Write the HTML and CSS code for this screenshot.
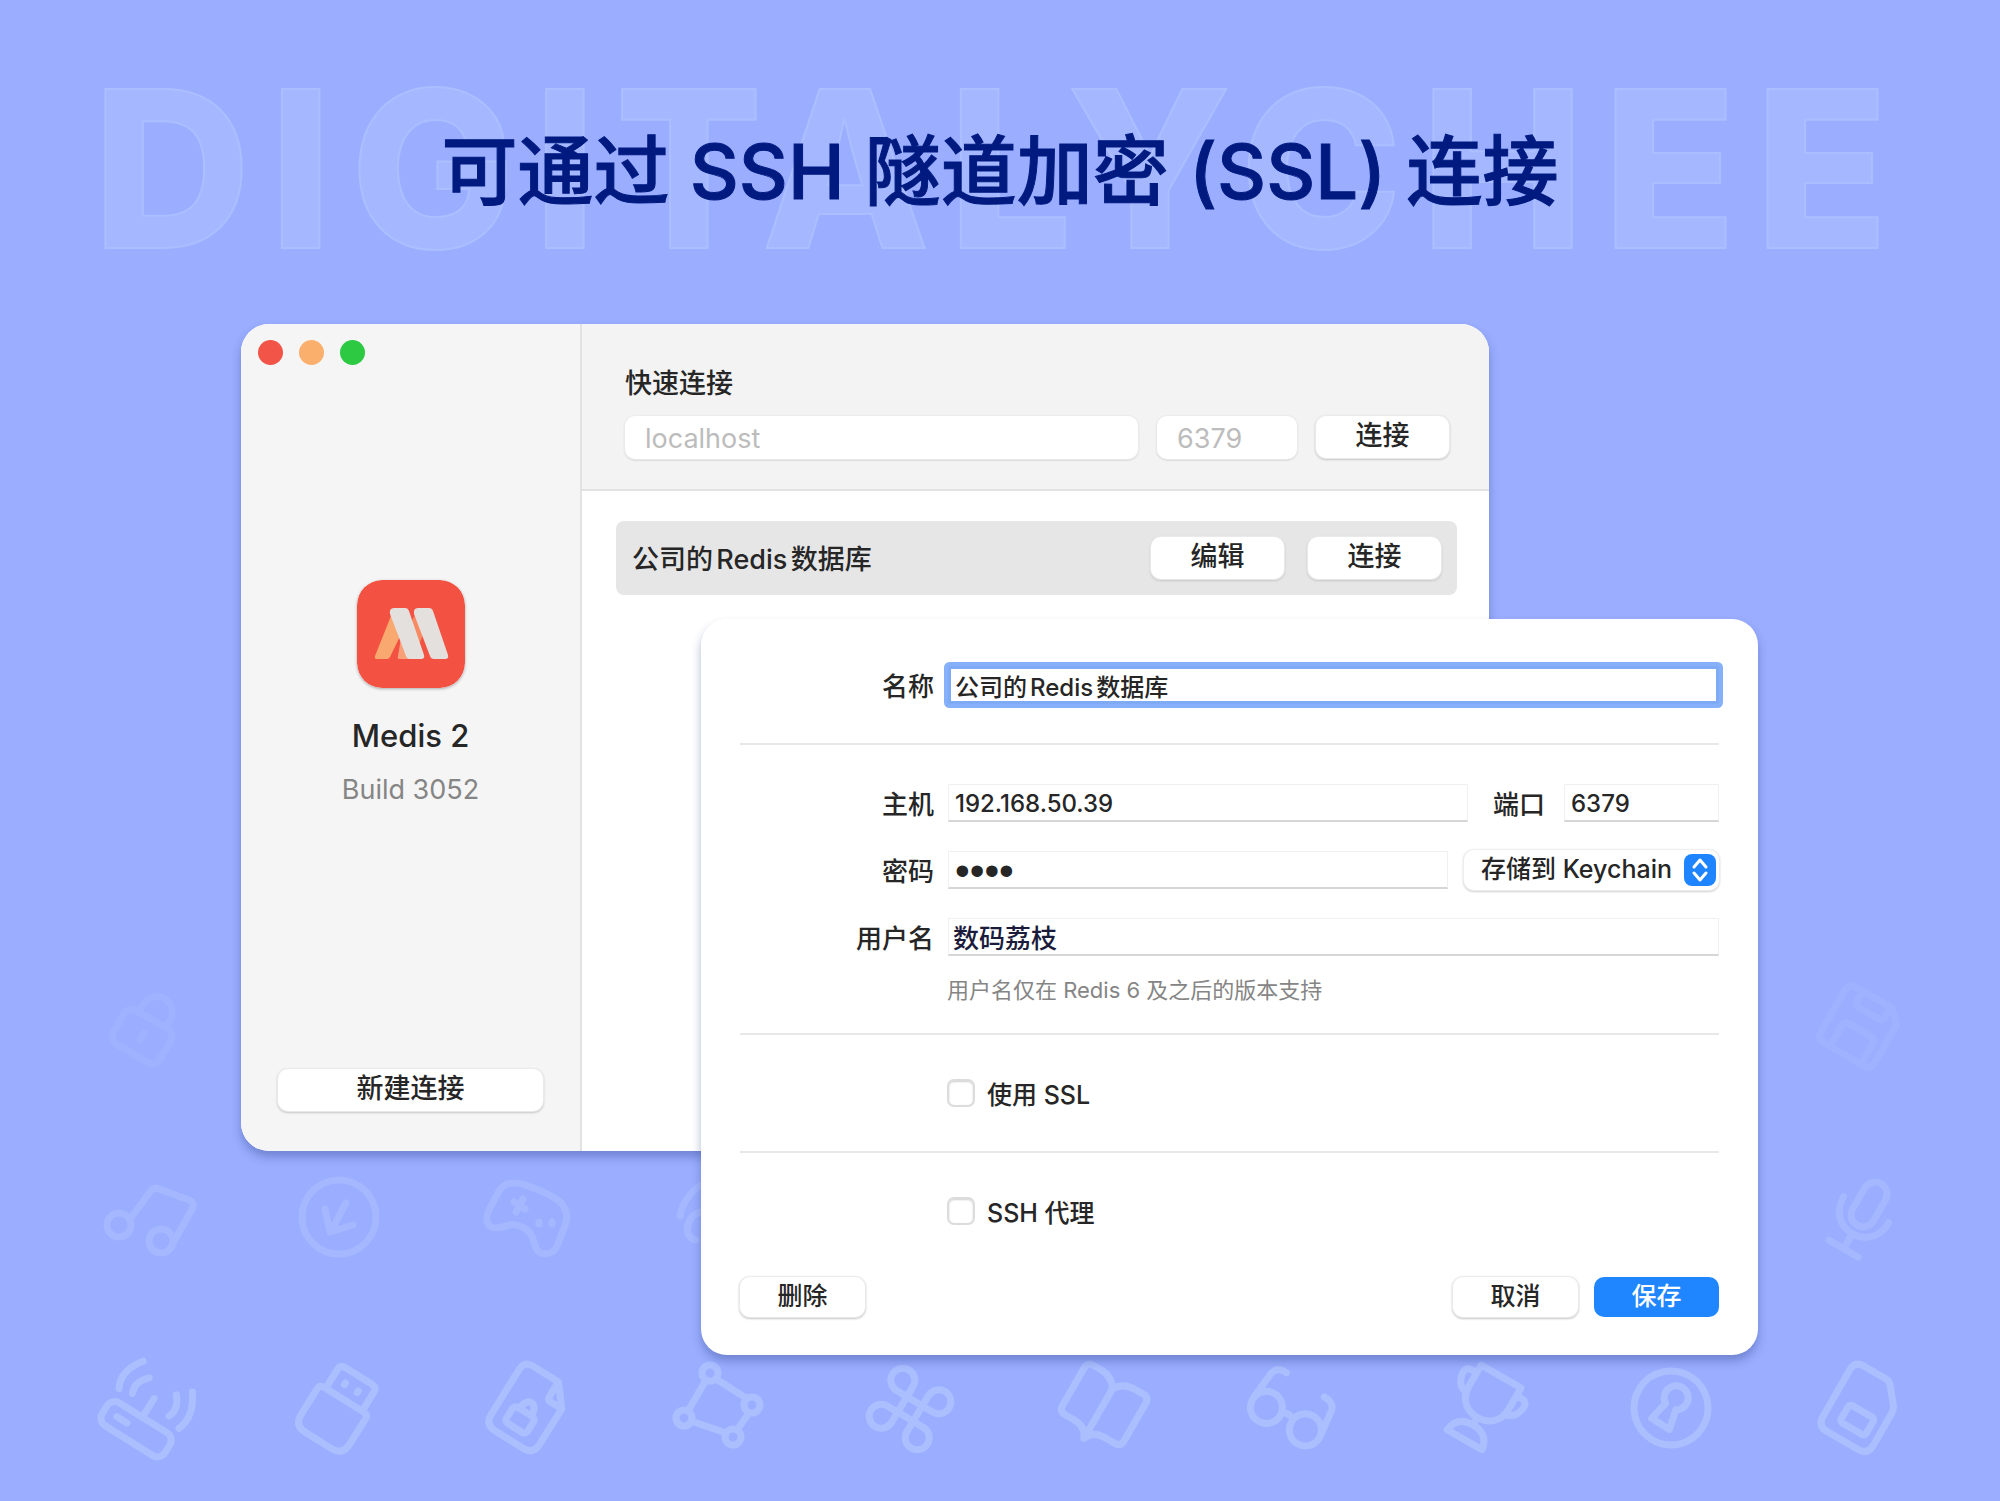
FILE: index.html
```html
<!DOCTYPE html>
<html lang="zh-CN">
<head>
<meta charset="utf-8">
<meta name="viewport" content="width=device-width, initial-scale=1">
<title>Medis 2</title>
<link rel="stylesheet" href="styles.css">
</head>
<body>
<main class="page">
  <div class="backdrop" aria-hidden="true">
    <div class="icon-row icon-row-faint">
      <svg class="icon" viewBox="-95 -95 190 190"><g transform="rotate(30)"><rect x="-26" y="-8" width="54" height="39" rx="9"/><path d="M-14-8v-9a15 15 0 0 1 31 0v9M1 7v8"/></g></svg>
      <svg class="icon icon-last" viewBox="-95 -95 190 190"><g transform="rotate(30)"><path d="M-22-32H20L32-20V24q0 8-8 8H-22q-8 0-8-8V-24q0-8 8-8ZM-14-32v11q0 5 5 5H13q5 0 5-5v-11M-15 32V10q0-7 7-7H14q7 0 7 7V32"/></g></svg>
    </div>
    <div class="icon-row icon-row-soft">
      <svg class="icon" viewBox="-95 -95 190 190"><circle cx="-28" cy="9" r="12"/><circle cx="14" cy="25" r="12"/><path d="M-17 3 3-24q3-5 9-3l30 11q6 3 3 9L25 29"/></svg>
      <svg class="icon" viewBox="-95 -95 190 190"><circle cx="2" cy="1" r="37"/><path d="M9-13-6 15M-12-7l5 23 23-7"/></svg>
      <svg class="icon" viewBox="-95 -95 190 190"><path d="M-13-33C-6-34 24-22 32-15 40-8 41 1 38 10L30 30C26 40 12 40 9 32 6 24 6 16-5 11-18 5-20 12-31 12-41 12-42 3-38-6L-28-25Q-23-33-13-33ZM-13-14l11 7M-4-17-11-4"/><path d="M12 6v2M25 6v2"/></svg>
      <svg class="icon" viewBox="-95 -95 190 190"><path d="M-38 0Q-34-22-12-34M-18-4c-14 4-18 26-4 28M-18-4q12 4 14 14"/></svg>
      <svg class="icon icon-last" viewBox="-95 -95 190 190"><g transform="rotate(30)"><rect x="-9" y="-39" width="24" height="48" rx="12"/><path d="M-23-9C-23 28 29 28 29-9M3 19v17M-14 36H20"/></g></svg>
    </div>
    <div class="icon-row">
      <svg class="icon" viewBox="-95 -95 190 190"><g transform="rotate(32)"><rect x="-34" y="12" width="74" height="27" rx="9"/><path d="M2 12v-22M-27-36Q-42-16-33 0M-13-25Q-24-14-19-3M31-36Q46-16 39 2M19-25Q29-14 24-3M-20 25h12"/></g></svg>
      <svg class="icon" viewBox="-95 -95 190 190"><g transform="rotate(32)"><path d="M-20-9H26q5 0 5 5V26q0 13-13 13H-13q-13 0-13-13V-4q0-5 6-5ZM-19-9V-31q0-6 6-6H18q6 0 6 6v22M-5-24v2M10-24v2"/></g></svg>
      <svg class="icon" viewBox="-95 -95 190 190"><g transform="rotate(32)"><path d="M-16-37H14L31-16V26q0 12-12 12H-14q-12 0-12-12V-27q0-10 10-10ZM14-36v16q0 4 4 4H31"/><rect x="-11" y="6" width="25" height="19" rx="4"/><path d="M-5 6c0-15 14-15 14 0"/></g></svg>
      <svg class="icon" viewBox="-95 -95 190 190"><circle cx="-8" cy="-33" r="8"/><circle cx="-34" cy="12" r="8"/><circle cx="34" cy="-1" r="8"/><circle cx="15" cy="31" r="8"/><path d="M-12-26-30 5M-2-27 28-8M-27 15 8 27M31 7 19 24"/></svg>
      <svg class="icon" viewBox="-95 -95 190 190"><g transform="translate(2 3) rotate(31)"><path d="M-9-9H9V9H-9ZM9-9V-21A12 12 0 1 1 21-9ZM9 9H21A12 12 0 1 1 9 21ZM-9 9V21A12 12 0 1 1-21 9ZM-9-9H-21A12 12 0 1 1-9-21Z"/></g></svg>
      <svg class="icon" viewBox="-95 -95 190 190"><g transform="rotate(30)"><path d="M4 35V-22Q-2-33-17-33H-24q-7 0-7 7V17q0 7 7 7h10Q0 24 4 35ZM4-22Q10-33 25-33h8q7 0 7 7V17q0 7-7 7H22Q8 24 4 35"/></g></svg>
      <svg class="icon" viewBox="-95 -95 190 190"><g transform="rotate(30)"><circle cx="-18" cy="12" r="16"/><circle cx="27" cy="12" r="16"/><path d="M-2 9q6-4 13 0M-34 10l3-30q2-9 13-8M43 10l-3-28q-2-8-13-8"/></g></svg>
      <svg class="icon" viewBox="-95 -95 190 190"><g transform="translate(2 1) rotate(30)"><path d="M-20-37H26V-12C26 18-20 18-20-12ZM-20-28h-6q-7 0-6 8 2 13 13 14M26-28h6q7 0 6 8-2 13-13 14M3 11v8M-17 36Q-15 19 3 19T23 36Z"/></g></svg>
      <svg class="icon" viewBox="-95 -95 190 190"><g transform="translate(2 2) rotate(32)"><circle r="37"/><path d="M-7-1A12 12 0 1 1 5-1L10 19H-11Z"/></g></svg>
      <svg class="icon" viewBox="-95 -95 190 190"><g transform="rotate(30)"><path d="M-16-37H10q4 0 7 4L30-17q2 3 2 7V27q0 11-11 11H-15q-11 0-11-11V-27q0-10 10-10Z"/><rect x="-9" y="3" width="29" height="20" rx="3"/></g></svg>
    </div>
  </div>

  <header class="hero">
    <div class="wordmark" aria-hidden="true">DIGITALYCHEE</div>
    <h1 class="headline">可通过 SSH 隧道加密 (SSL) 连接</h1>
  </header>

  <div class="desktop">
    <section class="window" aria-label="Medis 2">
      <aside class="sidebar">
        <div class="lights">
          <span class="light light-close"></span>
          <span class="light light-min"></span>
          <span class="light light-zoom"></span>
        </div>
        <div class="about">
          <svg class="logo" viewBox="0 0 108 108" role="img" aria-label="Medis">
            <rect width="108" height="108" rx="25" fill="#f35242"/>
            <path d="M34 36 48 46 33 77q-1 2-3 2H20q-3 0-2-3Z" fill="#f9a86f"/>
            <path d="M57 36 68 50 56 79H43q-3 0-2-3Z" fill="#f78a62"/>
            <path d="M45 52 56 79H43q-3 0-2-3Z" fill="#f9a07a"/>
            <path d="M37 28h11q3 0 4 3L67 75q1 4-3 4H53q-3 0-4-3L33 34q-1-6 4-6Z" fill="#e3e0dd"/>
            <path d="M61 28h11q3 0 4 3L91 75q1 4-3 4H77q-3 0-4-3L57 34q-1-6 4-6Z" fill="#e3e0dd"/>
          </svg>
          <p class="app-name">Medis 2</p>
          <p class="app-build">Build 3052</p>
        </div>
        <button class="button button-tall" type="button">新建连接</button>
      </aside>
      <div class="content">
        <form class="quick">
          <label class="quick-label" for="quick-host">快速连接</label>
          <div class="quick-row">
            <input class="quick-input quick-host" id="quick-host" type="text" placeholder="localhost">
            <input class="quick-input quick-port" type="text" placeholder="6379" aria-label="端口">
            <button class="button button-tall button-action" type="button">连接</button>
          </div>
        </form>
        <ul class="connections">
          <li class="connection">
            <span class="connection-name">公司的Redis数据库</span>
            <button class="button button-tall button-action" type="button">编辑</button>
            <button class="button button-tall button-action" type="button">连接</button>
          </li>
        </ul>
      </div>
    </section>

    <form class="sheet">
      <div class="section">
        <div class="row">
          <label class="label" for="name">名称</label>
          <input class="field field-focus" id="name" type="text" value="公司的Redis数据库">
        </div>
      </div>
      <div class="section section-host">
        <div class="row">
          <label class="label" for="host">主机</label>
          <input class="field" id="host" type="text" value="192.168.50.39">
          <label class="label-port" for="port">端口</label>
          <input class="field field-port" id="port" type="text" value="6379">
        </div>
        <div class="row">
          <label class="label" for="password">密码</label>
          <input class="field field-password" id="password" type="password" value="1234">
          <div class="picker">
            <select class="select" aria-label="密码存储方式"><option>存储到 Keychain</option></select>
            <svg class="picker-arrows" viewBox="0 0 32 32" aria-hidden="true"><rect width="32" height="32" rx="8" fill="#1e84ff"/><path d="M10 13l6-7 6 7M10 19l6 7 6-7" fill="none" stroke="#fff" stroke-width="3" stroke-linecap="round" stroke-linejoin="round"/></svg>
          </div>
        </div>
        <div class="row">
          <label class="label" for="user">用户名</label>
          <input class="field field-user" id="user" type="text" value="数码荔枝">
        </div>
        <p class="hint">用户名仅在 Redis 6 及之后的版本支持</p>
      </div>
      <div class="section section-check">
        <label class="check"><input class="checkbox" type="checkbox">使用 SSL</label>
      </div>
      <div class="section section-check">
        <label class="check"><input class="checkbox" type="checkbox">SSH 代理</label>
      </div>
      <div class="actions">
        <button class="button" type="button">删除</button>
        <span class="spacer"></span>
        <button class="button" type="button">取消</button>
        <button class="button button-primary" type="button">保存</button>
      </div>
    </form>
  </div>
</main>
</body>
</html>
```

FILE: styles.css
```css
* {
  box-sizing: border-box;
}

body {
  margin: 0;
  background: #9aadff;
  color: #262626;
  font-family: Inter, "Noto Sans CJK SC", sans-serif;
  font-size: 25px;
  font-weight: 500;
}

button,
input,
select {
  font: inherit;
  color: inherit;
}

p,
h1,
ul {
  margin: 0;
  padding: 0;
}

.page {
  position: relative;
  min-height: 100vh;
  padding-bottom: 146px;
  overflow: hidden;
}

/* Tilted line icons that fade out towards the top */
.backdrop {
  position: absolute;
  inset: 0;
  display: flex;
  flex-direction: column;
  justify-content: flex-end;
  padding: 0 2%;
}

.icon-row {
  display: grid;
  grid-template-columns: repeat(10, 1fr);
  justify-items: center;
  margin: 0 6px 0 12px;
}

.icon-row-soft {
  opacity: 0.6;
}

.icon-row-faint {
  opacity: 0.3;
}

.icon {
  width: 190px;
  height: 190px;
  fill: none;
  stroke: #abbfff;
  stroke-width: 7;
  stroke-linecap: round;
  stroke-linejoin: round;
}

.icon-last {
  grid-column: 10;
}

/* Headline */
.hero {
  position: relative;
  display: grid;
  place-items: center;
  height: 324px;
  padding-top: 14px;
  white-space: nowrap;
}

.wordmark,
.headline {
  grid-area: 1 / 1;
}

.wordmark {
  color: #a5b8ff;
  font-size: 218px;
  font-weight: 800;
  line-height: 1;
  letter-spacing: 19px;
  -webkit-text-stroke: 2px #abbeff;
}

.headline {
  z-index: 1;
  padding-top: 4px;
  color: #001a80;
  font-size: 76px;
  font-weight: 500;
  line-height: 100px;
  -webkit-text-stroke: 1px #001a80;
}

/* Overlapping windows */
.desktop {
  position: relative;
  display: grid;
  grid-template-columns: 12.05% 23% 39.4% 13.45% 1fr;
  grid-template-rows: 295px 532px auto;
}

.window {
  grid-area: 1 / 2 / 3 / 4;
  display: flex;
  overflow: hidden;
  border-radius: 28px;
  background: #fff;
}

.window,
.sheet {
  box-shadow: 0 6px 10px rgba(40, 60, 130, 0.36);
}

.sidebar {
  display: flex;
  flex-direction: column;
  justify-content: space-between;
  flex: 0 0 341px;
  padding: 16px 37px 40px 17px;
  border-right: 2px solid #e2e2e2;
  background: #f5f5f5;
}

.lights {
  display: flex;
  gap: 16px;
}

.light {
  width: 25px;
  height: 25px;
  border-radius: 50%;
}

.light-close {
  background: #f25447;
}

.light-min {
  background: #fbaf6d;
}

.light-zoom {
  background: #2dc943;
}

.about {
  display: flex;
  flex-direction: column;
  align-items: center;
  padding: 0 0 44px 20px;
}

.logo {
  width: 108px;
  height: 108px;
  border-radius: 25px;
  box-shadow: 0 1px 3px rgba(0, 0, 0, 0.3);
}

.app-name {
  margin-top: 24px;
  font-size: 31px;
  line-height: 48px;
}

.app-build {
  margin-top: 10px;
  color: #858585;
  font-size: 27px;
  font-weight: 400;
  line-height: 40px;
}

.sidebar .button {
  margin-left: 20px;
}

.content {
  flex: 1;
}

.quick {
  padding: 40px 40px 30px 43px;
  border-bottom: 2px solid #e2e2e2;
  background: #f3f3f3;
}

.quick-label {
  display: block;
  font-size: 27px;
  line-height: 40px;
}

.quick-row {
  display: flex;
  gap: 19px;
  margin-top: 12px;
}

.quick-input {
  height: 43px;
  padding: 2px 20px 0;
  border: 0;
  border-radius: 10px;
  background: #fff;
  box-shadow: 0 0 1px 1px #ececec, 0 1px 2px #a8a8a8;
  font-size: 27px;
  font-weight: 400;
}

.quick-input::placeholder {
  color: #bcbcbc;
}

.quick-host {
  flex: 1;
  min-width: 0;
}

.quick-port {
  width: 140px;
}

.connections {
  padding: 30px 32px 30px 34px;
  list-style: none;
}

.connection {
  display: flex;
  align-items: center;
  gap: 24px;
  height: 74px;
  padding: 0 16px;
  border-radius: 8px;
  background: #e6e6e6;
}

.connection-name {
  flex: 1;
  padding-bottom: 2px;
  font-size: 27px;
  text-autospace: normal;
}

.button {
  min-width: 125px;
  height: 40px;
  padding: 0 16px 2px;
  border: 0;
  border-radius: 10px;
  background: #fff;
  box-shadow: 0 0 1px 1px #ececec, 0 1px 2px 1px #c4c4c4;
  line-height: 36px;
}

.button-tall {
  height: 42px;
  font-size: 27px;
}

.button-action {
  width: 133px;
}

.button-primary {
  background: #2086ff;
  box-shadow: none;
  color: #fff;
}

/* Connection editor */
.sheet {
  z-index: 1;
  grid-area: 2 / 3 / 4 / 5;
  padding: 47px 39px 38px 39px;
  border-radius: 26px;
  background: #fff;
}

.section {
  padding-bottom: 39px;
  border-bottom: 2px solid #e8e8e8;
}

.section-host {
  padding: 39px 0 27px;
}

.section-check {
  padding: 38px 0 39px 207px;
}

.section-check:nth-last-child(2) {
  border-bottom: 0;
}

.row {
  display: flex;
  align-items: center;
  height: 38px;
}

.row + .row {
  margin-top: 29px;
}

.label {
  width: 194px;
  margin-right: 14px;
  padding-bottom: 2px;
  font-size: 26px;
  text-align: right;
}

.label-port {
  margin: 0 19px 0 25px;
  padding-bottom: 2px;
  font-size: 26px;
}

.field {
  flex: 1;
  min-width: 0;
  height: 38px;
  padding: 2px 6px 0;
  border: 1px solid #f0f0f0;
  border-bottom: 2px solid #d6d6d6;
  background: #fff;
  font-size: 24px;
  outline: 0;
  text-autospace: normal;
}

.field-port {
  flex: 0 0 155px;
}

.field-password {
  font-family: "Liberation Sans", sans-serif;
  font-size: 42px;
}

.field-user {
  padding: 0 4px;
  color: #1b1b3c;
  font-size: 26px;
}

.field-focus {
  padding: 0 4px;
  border: 3px solid #7eaaf6;
  border-radius: 2px;
  box-shadow: 0 0 0 4px #86b1fa;
}

.picker {
  position: relative;
  flex: 0 0 255px;
  margin-left: 16px;
}

.select {
  display: block;
  width: 100%;
  height: 40px;
  padding: 0 40px 2px 17px;
  border: 0;
  border-radius: 10px;
  background: #fff;
  box-shadow: 0 0 1px 1px #efefef, 0 1px 2px 1px #cfcfcf;
  appearance: none;
}

.picker-arrows {
  position: absolute;
  top: 4px;
  right: 3px;
  width: 32px;
  height: 32px;
  pointer-events: none;
}

.hint {
  margin: 18px 0 0 207px;
  color: #858585;
  font-size: 22px;
  font-weight: 400;
  line-height: 32px;
}

.check {
  display: flex;
  align-items: center;
  gap: 12px;
  height: 39px;
}

.checkbox {
  width: 28px;
  height: 28px;
  margin: 0;
  border: 2px solid #dcdcdc;
  border-radius: 7px;
  background: #fff;
  box-shadow: inset 0 1px 2px #d0d0d0;
  appearance: none;
}

.actions {
  display: flex;
  gap: 16px;
  padding-top: 8px;
}

.spacer {
  flex: 1;
}
```
